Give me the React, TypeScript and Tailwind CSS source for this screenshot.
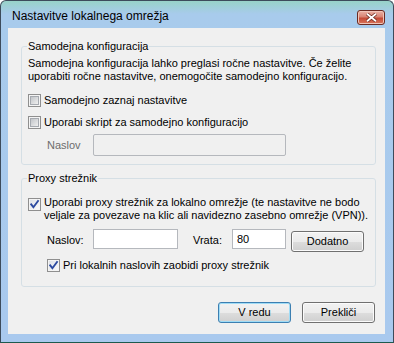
import React from "react";

const ui = "font-['Liberation_Sans',Tahoma,Arial,sans-serif] text-[11px] leading-[13px] text-black";

function Check({ checked }: { checked?: boolean }) {
  return (
    <span className="flex h-[13px] w-[13px] shrink-0 items-center justify-center border border-[#8f8f8f] bg-[#f4f4f4]">
      {checked ? (
        <span className="relative flex h-[9px] w-[9px] items-center justify-center bg-gradient-to-br from-[#dde1e8] to-[#f9f9f9]">
          <svg width="11" height="11" viewBox="0 0 11 11" className="absolute -left-px -top-px">
            <path d="M2.2 5.4 L4.4 8.2 L9 2" fill="none" stroke="#2c4aa0" strokeWidth="1.9" strokeLinecap="square" />
          </svg>
        </span>
      ) : (
        <span className="h-[9px] w-[9px] border border-[#a6aab0] bg-gradient-to-br from-[#c2c5c9] to-[#efefef]" />
      )}
    </span>
  );
}

interface BtnProps {
  children: React.ReactNode;
  focus?: boolean;
}

const Btn: React.FC<BtnProps> = ({ children, focus }) => {
  return (
    <button
      className={`h-[21px] w-[73px] shrink-0 rounded-[3px] border bg-[linear-gradient(#f2f2f2_0%,#ebebeb_50%,#dddddd_51%,#cfcfcf_100%)] ${ui} ${
        focus
          ? "border-[#3c7fb1] shadow-[inset_0_0_0_1px_#a0dcf6]"
          : "border-[#707070] shadow-[inset_0_0_0_1px_#fbfbfb]"
      }`}
    >
      {children}
    </button>
  );
};

export default function App() {
  return (
    <div className="h-[343px] w-[394px] overflow-hidden rounded-t-[6px] border border-[#3d4b5b] border-b-[#1d5a4e] bg-[linear-gradient(#98d2c8_0px,#a8cbec_13px,#a9c9ee_100%)]">
      {/* title bar */}
      <div className="flex h-[27px] items-start">
        <span className="ml-[11px] mt-[8px] font-['Liberation_Sans',Arial,sans-serif] text-[12px] leading-[15px] text-black">
          Nastavitve lokalnega omrežja
        </span>
        <div className="ml-auto mr-[8px] mt-[9px] flex h-[15px] w-[28px] items-center justify-center rounded-[3px] border border-[#6b2a22] bg-[linear-gradient(#eab2a6_0%,#d98474_45%,#c44a36_55%,#d9765c_100%)] shadow-[inset_0_0_0_1px_#f0c4b8]">
          <svg width="13" height="9" viewBox="0 0 13 9">
            <path d="M2 0.8 L6.5 4.5 L11 0.8 M2 8.2 L6.5 4.5 L11 8.2" fill="none" stroke="#6b2b20" strokeWidth="3.4" />
            <path d="M2 0.8 L6.5 4.5 L11 0.8 M2 8.2 L6.5 4.5 L11 8.2" fill="none" stroke="#ffffff" strokeWidth="1.8" />
          </svg>
        </div>
      </div>

      {/* client area */}
      <div className={`ml-[7px] h-[306px] w-[377px] bg-[#f0f0f0] pl-[13px] pt-[12px] ${ui}`}>
        <fieldset className="m-0 h-[125px] w-[355px] rounded-[3px] border border-[#d5dfe5] p-0">
          <legend className="ml-[5px] px-[1px]">Samodejna konfiguracija</legend>
          <div className="pl-[6px] pt-[4px]">
            <p>
              Samodejna konfiguracija lahko preglasi ročne nastavitve. Če želite
              <br />
              uporabiti ročne nastavitve, onemogočite samodejno konfiguracijo.
            </p>
            <label className="mt-[11px] flex items-center gap-[3px]">
              <Check />
              <span>Samodejno zaznaj nastavitve</span>
            </label>
            <label className="mt-[9px] flex items-center gap-[3px]">
              <Check />
              <span>Uporabi skript za samodejno konfiguracijo</span>
            </label>
            <div className="mt-[5px] flex items-center pl-[19px]">
              <span className="w-[46px] text-[#6d6d6d]">Naslov</span>
              <div className="h-[22px] w-[193px] rounded-[2px] border border-[#b5b8bd] bg-[#f0f0f0]" />
            </div>
          </div>
        </fieldset>

        <fieldset className="m-0 mt-[7px] h-[115px] w-[355px] rounded-[3px] border border-[#d5dfe5] p-0">
          <legend className="ml-[5px] px-[1px]">Proxy strežnik</legend>
          <div className="pl-[6px] pt-[11px]">
            <label className="flex items-start gap-[3px]">
              <span className="mt-[2px]">
                <Check checked />
              </span>
              <span>
                Uporabi proxy strežnik za lokalno omrežje (te nastavitve ne bodo
                <br />
                veljale za povezave na klic ali navidezno zasebno omrežje (VPN)).
              </span>
            </label>
            <div className="mt-[7px] flex items-start pl-[19px]">
              <span className="w-[46px] self-center">Naslov:</span>
              <div className="h-[20px] w-[85px] border border-[#b5b8bd] bg-white" />
              <span className="ml-[15px] w-[39px] self-center">Vrata:</span>
              <div className="flex h-[20px] w-[54px] items-center border border-[#b5b8bd] bg-white pl-[4px]">80</div>
              <div className="ml-[5px] mt-[2px]">
                <Btn>Dodatno</Btn>
              </div>
            </div>
            <label className="ml-[19px] mt-[7px] flex items-center gap-[3px]">
              <Check checked />
              <span>Pri lokalnih naslovih zaobidi proxy strežnik</span>
            </label>
          </div>
        </fieldset>

        <div className="mt-[15px] flex w-[354px] justify-end gap-[11px]">
          <Btn focus>V redu</Btn>
          <Btn>Prekliči</Btn>
        </div>
      </div>
    </div>
  );
}
